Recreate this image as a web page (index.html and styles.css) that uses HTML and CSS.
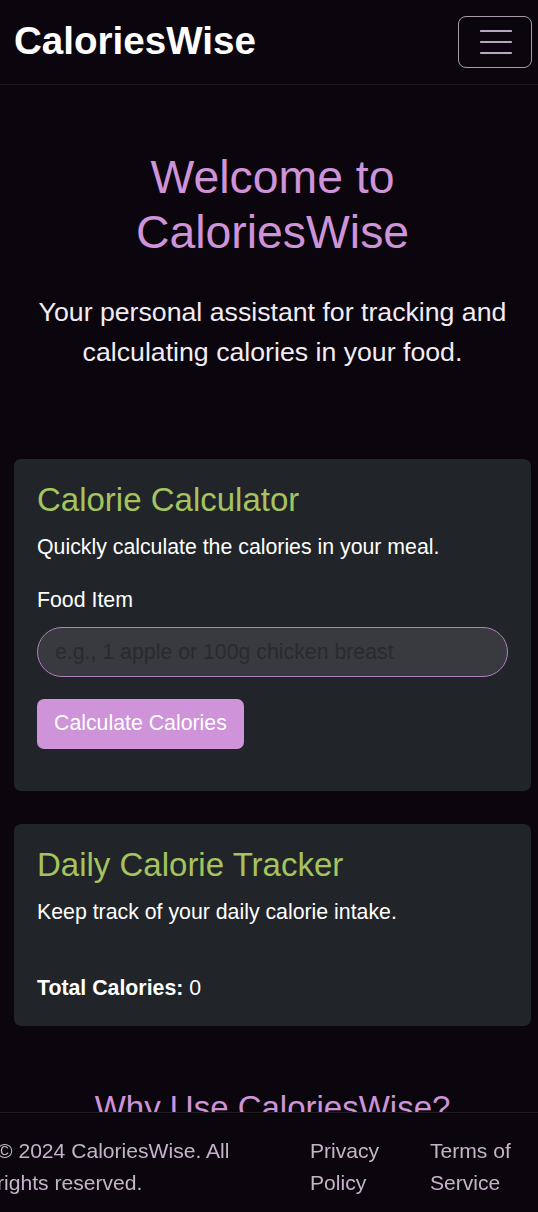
FILE: index.html
```html
<!DOCTYPE html>
<html lang="en">
<head>
<meta charset="utf-8">
<title>CaloriesWise</title>
<link rel="stylesheet" href="styles.css">
</head>
<body>
<nav class="navbar">
  <a class="brand" href="#">CaloriesWise</a>
  <button class="toggler" type="button" aria-label="Toggle navigation">
    <svg width="32" height="24" viewBox="0 0 32 24" aria-hidden="true">
      <path d="M1 2h30M1 13h30M1 24h30" stroke="#b9a5c0" stroke-width="2.2" stroke-linecap="round" transform="translate(0,-1)"/>
    </svg>
  </button>
</nav>

<main class="container">
  <section class="hero">
    <h1 class="hero-title">Welcome to CaloriesWise</h1>
    <p class="lead">Your personal assistant for tracking and calculating calories in your food.</p>
  </section>

  <section class="card">
    <h2 class="card-title">Calorie Calculator</h2>
    <p class="card-text">Quickly calculate the calories in your meal.</p>
    <label class="label" for="food">Food Item</label>
    <input class="input" id="food" type="text" placeholder="e.g., 1 apple or 100g chicken breast">
    <button class="btn" type="button">Calculate Calories</button>
  </section>

  <section class="card card-second">
    <h2 class="card-title">Daily Calorie Tracker</h2>
    <p class="card-text">Keep track of your daily calorie intake.</p>
    <ul class="food-list"></ul>
    <p class="total"><strong>Total Calories:</strong> 0</p>
  </section>

  <section class="why">
    <h2 class="why-title">Why Use CaloriesWise?</h2>
  </section>
</main>

<footer class="footer">
  <p class="copy">© 2024 CaloriesWise. All rights reserved.</p>
  <a class="flink" href="#">Privacy Policy</a>
  <a class="flink" href="#">Terms of Service</a>
</footer>
</body>
</html>
```

FILE: styles.css
```css
* { box-sizing: border-box; }

html, body {
  margin: 0;
  padding: 0;
}

body {
  background: #0b060d;
  color: #ffffff;
  font-family: "Liberation Sans", Arial, sans-serif;
  font-size: 21.3px;
  line-height: 31.5px;
  overflow: hidden;
  height: 1212px;
}

.navbar {
  height: 85px;
  display: flex;
  align-items: center;
  justify-content: space-between;
  padding: 0 6px 0 14px;
  border-bottom: 1px solid #1e1921;
}

.brand {
  color: #ffffff;
  font-weight: 700;
  font-size: 38.6px;
  line-height: 1.2;
  text-decoration: none;
  margin-top: -1px;
}

.toggler {
  width: 74px;
  height: 52px;
  background: transparent;
  border: 1px solid #a99aab;
  border-radius: 8px;
  display: flex;
  align-items: center;
  justify-content: center;
  padding: 0;
  margin-top: -1px;
}

.toggler svg { display: block; margin-left: 2px; }

.container {
  padding: 0 7px 0 14px;
}

.hero {
  text-align: center;
  padding: 65px 0 0;
}

.hero-title {
  margin: 0 0 32px;
  font-size: 46.4px;
  line-height: 55px;
  font-weight: 400;
  color: #ce93d8;
  padding: 0 60px;
}

.lead {
  margin: 0 0 87px;
  font-size: 26.7px;
  line-height: 40px;
  color: #f2ecf5;
}

.card {
  background: #212529;
  border-radius: 7px;
  padding: 21px 23px 21px 23px;
}

.card-second {
  margin-top: 33px;
}

.card-title {
  margin: 0 0 12.5px;
  font-size: 33px;
  line-height: 1.2;
  font-weight: 400;
  color: #a5c35f;
}

.card-text {
  margin: 0 0 21px;
}

.label {
  display: block;
  margin-bottom: 11px;
}

.input {
  display: block;
  width: 100%;
  height: 50px;
  margin: 0 0 22px;
  padding: 0 17px;
  font-family: inherit;
  font-size: 21.3px;
  color: #ffffff;
  background: #383a40;
  border: 1px solid #b57fc0;
  border-radius: 25px;
  outline: none;
}

.input::placeholder {
  color: #292a2e;
  opacity: 1;
}

.btn {
  display: inline-block;
  font-family: inherit;
  font-size: 21.3px;
  line-height: 31.5px;
  color: #ffffff;
  background: #ce93d8;
  border: none;
  border-radius: 7px;
  padding: 9px 17px 9px 17px;
  margin: 0 0 21px;
  cursor: pointer;
}

.food-list {
  list-style: none;
  margin: 0;
  padding: 0;
  min-height: 24px;
}

.total {
  margin: 0;
}

.why {
  margin-top: 62px;
  text-align: center;
}

.why-title {
  margin: 0 0 20px;
  font-size: 33px;
  line-height: 1.2;
  font-weight: 400;
  color: #ce93d8;
}

.footer {
  position: fixed;
  left: 0;
  right: 0;
  bottom: 0;
  height: 100px;
  background: #0b060d;
  border-top: 1px solid #221c25;
  padding: 22px 0 0;
  display: grid;
  grid-template-columns: 1fr 120px 123px;
  align-items: start;
  color: #c3b5c7;
  font-size: 21.1px;
  line-height: 32px;
}

.copy {
  margin: 0 0 0 -3px;
  width: 250px;
}

.flink {
  color: #c3b5c7;
  text-decoration: none;
  padding: 0 16px 0 15px;
}
```
